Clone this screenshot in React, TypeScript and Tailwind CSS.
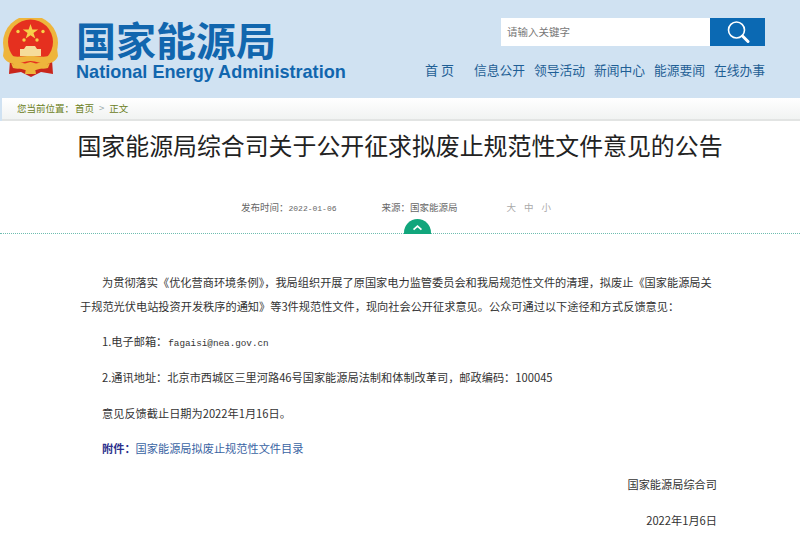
const NAV_ITEMS = ['信息公开', '领导活动', '新闻中心', '能源要闻', '在线办事'];

const CJK = "font-['Noto_Sans_CJK_SC','Noto_Sans',sans-serif]";

function Emblem() {
  return (
    <svg viewBox="0 0 56 60" className="w-[56px] h-[60px] shrink-0 mt-[1px]">
      <path d="M7 42 L49 42 L50 56 L38 54 L28 59 L18 54 L6 56 Z" fill="#c9261c" />
      <circle cx="27.5" cy="25" r="27.5" fill="#eeb53c" />
      <circle cx="27.5" cy="24" r="22.5" fill="#e5301f" />
      <path d="M27.5 6 L29.4 11.6 L35.2 11.6 L30.5 15 L32.3 20.6 L27.5 17.2 L22.7 20.6 L24.5 15 L19.8 11.6 L25.6 11.6 Z" fill="#f7d04a" />
      <circle cx="15" cy="13.5" r="1.7" fill="#f7d04a" />
      <circle cx="40" cy="13.5" r="1.7" fill="#f7d04a" />
      <circle cx="21" cy="22" r="1.7" fill="#f7d04a" />
      <circle cx="34" cy="22" r="1.7" fill="#f7d04a" />
      <path d="M21 31 L23 28 L32 28 L34 31 L38 31 L38 38 L17 38 L17 31 Z" fill="#f6dc9a" />
      <path d="M1 30 C6 42 16 38 27.5 38 C39 38 49 42 54 30 L55 38 C50 50 38 44 27.5 43 C17 44 5 50 0 38 Z" fill="#eeb53c" />
      <path d="M8 45 C16 50 22 45 27.5 44 C33 45 39 50 47 45 L45 50 C38 52 34 49 32 50 L33 56 L22 56 L23 50 C21 49 17 52 10 50 Z" fill="#eeb53c" />
    </svg>
  );
}

function Header() {
  return (
    <header className="h-[98px] bg-[#d0e2f2] flex justify-between">
      <div className="flex items-start pl-[3px] pt-[17px] gap-[17px]">
        <Emblem />
        <div className="flex flex-col">
          <div className={`${CJK} text-[40px] leading-[44px] font-bold text-[#1166ae]`}>国家能源局</div>
          <div className="font-['Liberation_Sans',sans-serif] text-[18.1px] leading-[22px] font-bold text-[#1166ae]">
            National Energy Administration
          </div>
        </div>
      </div>
      <div className="flex flex-col items-end pr-[35px] pt-[18px]">
        <div className="flex h-[28px] w-[264px]">
          <div className={`${CJK} flex-1 bg-white text-[10.5px] text-[#777] pl-[6px] flex items-center`}>请输入关键字</div>
          <div className="w-[55px] bg-[#0b69b3] flex items-center justify-center">
            <svg viewBox="0 0 24 24" className="w-[24px] h-[24px]">
              <circle cx="10.5" cy="10" r="8" fill="none" stroke="#fff" strokeWidth="1.6" />
              <path d="M16.5 16 L22 21.5" stroke="#fff" strokeWidth="3" strokeLinecap="round" />
            </svg>
          </div>
        </div>
        <nav className={`${CJK} flex items-center mt-[15px] text-[12.75px] leading-[18px] text-[#1f5f95]`}>
          <span className="text-[13px] mr-[20px] whitespace-pre">首 页</span>
          <div className="flex gap-[9px]">
            {NAV_ITEMS.map((item) => (
              <span key={item}>{item}</span>
            ))}
          </div>
        </nav>
      </div>
    </header>
  );
}

function Breadcrumb() {
  return (
    <div className="pl-[2px] bg-[#d0e2f2]">
      <div className={`${CJK} h-[23px] bg-gradient-to-b from-white to-[#f1f3f2] border-b-[2px] border-[#e2e4e3] pl-[15px] flex items-center text-[9.5px] text-[#6b8023]`}>
        <span>您当前位置：</span>
        <span className="ml-[1px]">首页</span>
        <span className="mx-[5px] text-[#9aa]">&gt;</span>
        <span>正文</span>
      </div>
    </div>
  );
}

function MetaRow() {
  return (
    <div className={`${CJK} relative h-[36px] mt-[35px] border-b border-dotted border-[#6fbdb0] text-[9.5px] leading-[16px] text-[#666] flex justify-start pl-[241px] pt-[1px]`}>
      <span>
        发布时间：<span className="font-['Liberation_Mono',monospace] text-[8px] leading-none">2022-01-06</span>
      </span>
      <span className="ml-[45px]">来源：国家能源局</span>
      <span className="ml-[49px] text-[#aaa] flex gap-[8px]">
        <span>大</span>
        <span>中</span>
        <span>小</span>
      </span>
      <div className="absolute left-[404px] -bottom-[1px] w-[27px] h-[15px] rounded-t-full bg-[#12a67c] flex items-center justify-center">
        <svg viewBox="0 0 12 8" className="w-[11px] h-[7px] mt-[2px]">
          <path d="M1.5 6.5 L6 2.5 L10.5 6.5" fill="none" stroke="#fff" strokeWidth="2" />
        </svg>
      </div>
    </div>
  );
}

function Article() {
  return (
    <div className={`${CJK} pl-[80px] pr-[80px] pt-[36px] text-[11.2px] text-[#333]`}>
      <p className="leading-[24px] indent-[22px] whitespace-nowrap">
        为贯彻落实《优化营商环境条例》，我局组织开展了原国家电力监管委员会和我局规范性文件的清理，拟废止《国家能源局关
        <br />
        于规范光伏电站投资开发秩序的通知》等3件规范性文件，现向社会公开征求意见。公众可通过以下途径和方式反馈意见：
      </p>
      <div className="pl-[22px] mt-[11px] flex flex-col leading-[24px] gap-[11.8px]">
        <p>
          1.电子邮箱：<span className="ml-[1px] font-['Liberation_Mono',monospace] text-[9.3px] leading-none">fagaisi@nea.gov.cn</span>
        </p>
        <p>2.通讯地址：北京市西城区三里河路46号国家能源局法制和体制改革司，邮政编码：100045</p>
        <p>意见反馈截止日期为2022年1月16日。</p>
        <p>
          <span className="font-bold text-[#2c2f8c]">附件：</span>
          <span className="text-[#3a64a3]">国家能源局拟废止规范性文件目录</span>
        </p>
        <p className="text-right pr-[3px]">国家能源局综合司</p>
        <p className="text-right pr-[3px]">2022年1月6日</p>
      </div>
    </div>
  );
}

export default function App() {
  return (
    <div className="w-[800px] h-[550px] overflow-hidden bg-white">
      <Header />
      <Breadcrumb />
      <h1 className={`${CJK} text-[23.9px] leading-[36px] mt-[6px] text-center font-normal text-[#222]`}>
        国家能源局综合司关于公开征求拟废止规范性文件意见的公告
      </h1>
      <MetaRow />
      <Article />
    </div>
  );
}
